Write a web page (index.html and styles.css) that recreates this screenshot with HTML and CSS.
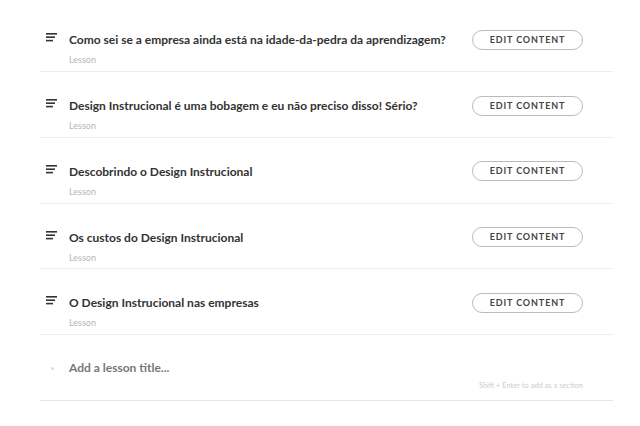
FILE: index.html
```html
<!DOCTYPE html>
<html>
<head>
<meta charset="utf-8">
<link rel="stylesheet" href="styles.css">
</head>
<body>
<div class="list">
  <div class="row">
    <div class="head">
      <svg class="icon" width="12" height="9" viewBox="0 0 12 9"><rect x="0" y="0" width="11" height="1.6" fill="#333"/><rect x="0" y="3.4" width="9" height="1.6" fill="#333"/><rect x="0" y="6.8" width="7" height="1.6" fill="#333"/></svg>
      <div class="title">Como sei se a empresa ainda está na idade-da-pedra da aprendizagem?</div>
      <button class="btn">EDIT CONTENT</button>
    </div>
    <div class="sub">Lesson</div>
  </div>
  <div class="row">
    <div class="head">
      <svg class="icon" width="12" height="9" viewBox="0 0 12 9"><rect x="0" y="0" width="11" height="1.6" fill="#333"/><rect x="0" y="3.4" width="9" height="1.6" fill="#333"/><rect x="0" y="6.8" width="7" height="1.6" fill="#333"/></svg>
      <div class="title">Design Instrucional é uma bobagem e eu não preciso disso! Sério?</div>
      <button class="btn">EDIT CONTENT</button>
    </div>
    <div class="sub">Lesson</div>
  </div>
  <div class="row">
    <div class="head">
      <svg class="icon" width="12" height="9" viewBox="0 0 12 9"><rect x="0" y="0" width="11" height="1.6" fill="#333"/><rect x="0" y="3.4" width="9" height="1.6" fill="#333"/><rect x="0" y="6.8" width="7" height="1.6" fill="#333"/></svg>
      <div class="title">Descobrindo o Design Instrucional</div>
      <button class="btn">EDIT CONTENT</button>
    </div>
    <div class="sub">Lesson</div>
  </div>
  <div class="row">
    <div class="head">
      <svg class="icon" width="12" height="9" viewBox="0 0 12 9"><rect x="0" y="0" width="11" height="1.6" fill="#333"/><rect x="0" y="3.4" width="9" height="1.6" fill="#333"/><rect x="0" y="6.8" width="7" height="1.6" fill="#333"/></svg>
      <div class="title">Os custos do Design Instrucional</div>
      <button class="btn">EDIT CONTENT</button>
    </div>
    <div class="sub">Lesson</div>
  </div>
  <div class="row">
    <div class="head">
      <svg class="icon" width="12" height="9" viewBox="0 0 12 9"><rect x="0" y="0" width="11" height="1.6" fill="#333"/><rect x="0" y="3.4" width="9" height="1.6" fill="#333"/><rect x="0" y="6.8" width="7" height="1.6" fill="#333"/></svg>
      <div class="title">O Design Instrucional nas empresas</div>
      <button class="btn">EDIT CONTENT</button>
    </div>
    <div class="sub">Lesson</div>
  </div>
  <div class="add">
    <div class="add-head">
      <span class="dot"></span>
      <div class="add-title">Add a lesson title...</div>
    </div>
    <div class="hint">Shift + Enter to add as a section</div>
  </div>
</div>
</body>
</html>
```

FILE: styles.css
```css
html, body {
  margin: 0;
  padding: 0;
  background: #fff;
}
body {
  font-family: Lato, "Open Sans", sans-serif;
  color: #333;
}
.list {
  margin-left: 40px;
  width: 573px;
  padding-top: 6.3px;
}
.row {
  box-sizing: border-box;
  height: 65.8px;
  border-bottom: 1px solid #ececec;
  padding-top: 26px;
  padding-left: 6px;
}
.head {
  display: flex;
  align-items: center;
  height: 16px;
}
.icon {
  display: block;
  width: 12px;
  height: 9px;
  margin-top: -5px;
  flex: none;
}
.title {
  margin-left: 11px;
  font-size: 12px;
  font-weight: 700;
  color: #333;
  line-height: 16px;
  flex: 1;
  white-space: nowrap;
}
.btn {
  flex: none;
  box-sizing: border-box;
  width: 111px;
  height: 20px;
  margin-right: 30px;
  margin-top: -1px;
  border: 1px solid #bbb;
  border-radius: 10px;
  background: #fff;
  font-family: Lato, sans-serif;
  font-size: 9px;
  font-weight: 700;
  letter-spacing: 0.9px;
  color: #444;
  padding: 0;
  line-height: 18px;
}
.sub {
  margin-left: 23px;
  margin-top: 6px;
  font-size: 9px;
  line-height: 12px;
  color: #b5b5b5;
}
.add {
  box-sizing: border-box;
  height: 66px;
  border-bottom: 1px solid #e6e6e6;
  padding-top: 25px;
  padding-left: 6px;
}
.add-head {
  display: flex;
  align-items: center;
  height: 16px;
}
.dot {
  width: 3px;
  height: 3px;
  border-radius: 50%;
  background: #ddd;
  margin-left: 5px;
  margin-right: 15px;
  flex: none;
}
.add-title {
  font-size: 12px;
  font-weight: 700;
  color: #777;
  line-height: 16px;
}
.hint {
  text-align: right;
  margin-right: 30px;
  margin-top: 5px;
  font-size: 7.5px;
  line-height: 10px;
  color: #ccc;
}
```
